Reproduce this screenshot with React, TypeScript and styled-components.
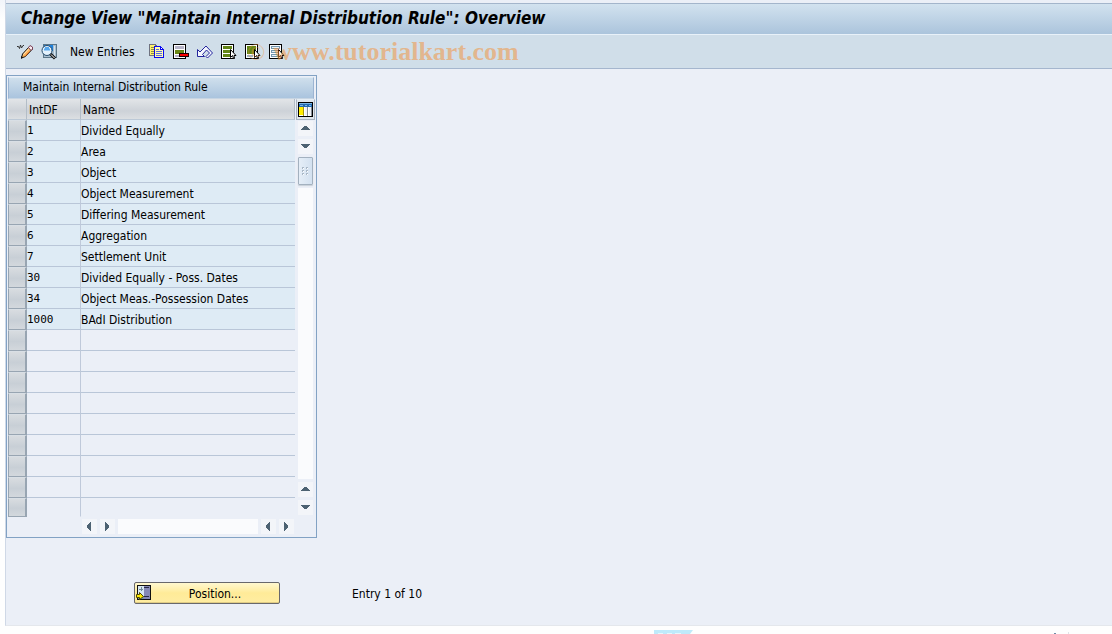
import React from "react";
import styled, { createGlobalStyle } from "styled-components";

const GlobalStyle = createGlobalStyle`
  * { box-sizing: border-box; }
  body {
    margin: 0;
    background: #fefefe;
    color: #000;
    font: 12px/16px "DejaVu Sans Condensed", "DejaVu Sans", sans-serif;
  }
  button { font: inherit; color: inherit; margin: 0; padding: 0; border: 0; background: none; }
  svg { display: block; flex: none; }
`;

const Page = styled.div`
  padding-left: 5px;
  background: linear-gradient(to bottom, #f1f4fa 0, #fefefe 20px);
`;
const Window = styled.main`
  border-left: 1px solid #cfd8e6;
  border-bottom: 1px solid #e4e7ec;
  background: #ebeff7;
  padding: 3px 0 21px;
`;
const TitleBar = styled.header`
  height: 32px;
  display: flex;
  align-items: center;
  padding: 0 15px 2px;
  border-top: 1px solid #a3b5cb;
  border-bottom: 1px solid #e8f1f9;
  background: linear-gradient(#d2e2ef, #abc4dc);
`;
const Title = styled.h1`
  margin: 0;
  font: italic bold 17px/24px "DejaVu Sans Condensed", "DejaVu Sans", sans-serif;
  white-space: nowrap;
`;
const Toolbar = styled.div`
  position: relative;
  display: flex;
  align-items: center;
  gap: 8px;
  height: 34px;
  padding: 0 11px;
  border-bottom: 1px solid #a5b6ce;
  background: #d0dee9;
`;
const ToolButton = styled.button`
  display: flex;
  align-items: center;
  height: 20px;
`;
const TextButton = styled(ToolButton)`
  padding: 0 6px 0 5px;
  white-space: nowrap;
`;
const Watermark = styled.span`
  position: absolute;
  left: 241px;
  top: 2px;
  display: flex;
  align-items: center;
  gap: 8px;
  color: rgba(242, 148, 62, 0.55);
  font: bold 26px/30px "Liberation Serif", serif;
  white-space: nowrap;
  pointer-events: none;
`;
const CopyrightSign = styled.span`
  font-size: 24px;
  font-weight: normal;
  opacity: 0.8;
`;
const Panel = styled.section`
  width: 311px;
  margin-top: 6px;
  padding: 1px;
  border: 1px solid #82a2c4;
`;
const PanelTitle = styled.h2`
  margin: 0 1px 0 0;
  height: 22px;
  padding: 1px 14px;
  border: 1px solid #9cb4d2;
  border-top-color: #dfebf5;
  border-bottom-color: #c7d5e3;
  background: linear-gradient(#cfdfec, #aac4de);
  font-weight: normal;
  font-size: 12px;
  line-height: 17px;
`;
const GridArea = styled.div`
  display: grid;
  grid-template-columns: 288px 19px;
`;
const Table = styled.table`
  width: 287px;
  border-collapse: separate;
  border-spacing: 0;
  table-layout: fixed;
`;
const HeadCell = styled.th<{ $w?: number }>`
  width: ${(p) => (p.$w ? `${p.$w}px` : "auto")};
  height: 21px;
  padding: 2px 2px 0;
  border-right: 1px solid #b3bdc7;
  border-bottom: 1px solid #bcc9d7;
  background: linear-gradient(#e2e5e8, #cdd2d8 60%, #dcdfe2);
  text-align: left;
  font-weight: normal;
`;
const Row = styled.tr<{ $filled: boolean }>`
  height: 21px;
  background: ${(p) => (p.$filled ? "#deebf5" : "#ebeff7")};
  &:last-child { height: 19px; }
  &:last-child td { border-bottom-color: transparent; }
`;
const Cell = styled.td<{ $code?: boolean }>`
  height: inherit;
  padding: 2px 0 0;
  border-bottom: 1px solid #b9c6d8;
  border-right: ${(p) => (p.$code ? "1px solid #bfc9da" : "0")};
  white-space: nowrap;
  ${(p) => p.$code && 'font: 11px/16px "DejaVu Sans Mono", monospace;'}
`;
const SelectorCell = styled.td`
  height: inherit;
  padding: 0;
`;
const Selector = styled.button`
  display: block;
  width: 19px;
  height: 21px;
  border: 1px solid #98a5b2;
  border-top-color: #d9dfe5;
  border-right-width: 2px;
  background: linear-gradient(#d8dce0, #c8cfd6 55%, #d3d8dd);
  tr:last-child & { height: 19px; }
`;
const SideBar = styled.div`
  display: flex;
  flex-direction: column;
  align-items: center;
`;
const ConfigButton = styled.button`
  width: 19px;
  height: 21px;
  padding: 0 1px 1px;
  border: 1px solid #a7b2c0;
  border-top-color: #e5edf4;
  background: #dfe6ed;
`;
const ArrowButton = styled.button`
  display: flex;
  align-items: center;
  justify-content: center;
  flex: none;
  width: 15px;
  height: 15px;
  background: #f3f5f9;
`;
const VerticalScroll = styled.div`
  flex: 1;
  display: flex;
  flex-direction: column;
  gap: 3px;
  padding: 1px 0 2px;
`;
const Track = styled.div`
  flex: 1;
  background: #fafbfd;
`;
const Thumb = styled.div`
  display: flex;
  align-items: center;
  justify-content: center;
  height: 28px;
  border: 1px solid #a3b1bf;
  border-radius: 1px;
  background: linear-gradient(to right, #e5eef7, #d3e1f0);
  box-shadow: 0 1px 1px #c8d0d8;
`;
const HorizontalScroll = styled.div`
  display: flex;
  gap: 3px;
  padding: 2px 2px 2px 74px;
`;
const Footer = styled.div`
  display: flex;
  align-items: center;
  gap: 72px;
  padding: 44px 128px 0;
`;
const PositionButton = styled.button`
  display: flex;
  align-items: center;
  width: 146px;
  height: 22px;
  padding: 0 1px;
  border: 1px solid #68686c;
  border-radius: 2px;
  background: linear-gradient(#fff8d0, #ffeb98 50%, #ffeda2);
  box-shadow: inset 0 -1px #e0cc85;
`;
const ButtonLabel = styled.span`
  flex: 1;
  padding-top: 2px;
  text-align: center;
`;
const EntryCount = styled.span`
  padding-top: 2px;
`;
const Below = styled.div`
  display: flex;
  gap: 361px;
  height: 8px;
  overflow: hidden;
  padding: 4px 0 0 649px;
`;

type IconProps = { children: React.ReactNode };
const Icon = ({ children }: IconProps) => (
  <svg width="16" height="16" viewBox="0 0 16 16" shapeRendering="crispEdges" aria-hidden="true">
    {children}
  </svg>
);

const EditIcon = () => (
  <Icon>
    <g shapeRendering="auto">
      <path d="M0 2.5h1.5l1 2 1-3.5 1 3 1.5-2.5h1" fill="none" stroke="#333" />
      <path d="M4.500 14l1-4 7-7.500 3 2.500-7 7.500z" fill="#ffb65c" stroke="#111" />
      <path d="M6.500 10.500l6-6.500" stroke="#ffe6be" />
      <path d="M11.500 3.500l1.500-2 2.500 1.500v2l-1.500 1.500z" fill="#f8edf2" stroke="#7b4058" />
      <path d="M12.500 7.500l-4.500 5" stroke="#e97725" />
      <path d="M4 15v-3l2 1.500z" fill="#111" />
    </g>
  </Icon>
);
const FindIcon = () => (
  <Icon>
    <path d="M2.5 .5h13v13H2.5z" fill="#a9bfd0" stroke="#5c7688" />
    <path d="M3 1h9v6H3z" fill="#1f82dd" />
    <path d="M13.5 2v10" fill="none" stroke="#d8e4ec" />
    <g shapeRendering="auto">
      <circle cx="6" cy="6.500" r="5" fill="#e3f1fc" stroke="#244a6b" />
      <path d="M3 5.500h6M4 4h4" stroke="#57a8ee" strokeWidth="2" />
      <path d="M9.500 10l4.500 4.500" stroke="#111" strokeWidth="3" />
      <path d="M10 10.500l3.500 3.500" stroke="#fff" />
    </g>
  </Icon>
);
const CopyIcon = () => (
  <Icon>
    <path d="M0 0h6l2 2v10H0z" fill="#6f7280" />
    <path d="M1 1h5v10H1z" fill="#fff36b" />
    <path d="M2 3h3v1H2zM2 5h3v1H2zM2 7h3v1H2zM2 9h3v1H2z" fill="#8d8a4c" />
    <path d="M5 2h7v1h1v1h1v1h1v9H5z" fill="#0a0af0" />
    <path d="M6 3h5v3h3v7H6z" fill="#fffbb0" />
    <path d="M12 4h1v1h-1z" fill="#fff" />
    <path d="M7 5h3v1H7zM7 7h6v1H7zM7 9h6v1H7zM7 11h6v1H7z" fill="#5c6be0" />
  </Icon>
);
const DeleteIcon = () => (
  <Icon>
    <path d="M.5 .5h12v14H.5z" fill="#fff" stroke="#000" />
    <path d="M2 2h9v3H2z" fill="#b7b5c9" />
    <path d="M2 6h9v4H2z" fill="#688615" />
    <path d="M2 11h4v2H2z" fill="#b7b5c9" />
    <path d="M6 9h10v4H6z" fill="#1c0000" />
    <path d="M7 10h8v2H7z" fill="#f90000" />
  </Icon>
);
const UndoIcon = () => (
  <Icon>
    <path d="M.5 5.500v7h7L5.500 10.500l4-4.500 3 3-3.500 3.500 1.500 1.500 5-5-6.500-7L3 8z" fill="#f5f7ff" stroke="#23249c" shapeRendering="auto" />
  </Icon>
);
const Pointer = () => (
  <path d="M9.5 5.500v8l2-2 1 3h1l-.5-3h2z" fill="#fff" stroke="#000" shapeRendering="auto" />
);
const SelectAllIcon = () => (
  <Icon>
    <path d="M.5 .5h12v14H.5z" fill="#fff" stroke="#000" />
    <path d="M2 2h9v3H2zM2 6h9v3H2zM2 10h9v3H2z" fill="#638617" />
    <Pointer />
  </Icon>
);
const SelectBlockIcon = () => (
  <Icon>
    <path d="M.5 .5h12v14H.5z" fill="#fff" stroke="#000" />
    <path d="M2 2h9v8H2z" fill="#638617" />
    <path d="M2 11h6v2H2z" fill="#9db0c4" />
    <Pointer />
  </Icon>
);
const DeselectIcon = () => (
  <Icon>
    <path d="M.5 .5h12v14H.5z" fill="#fff" stroke="#000" />
    <path d="M2 2h9v3H2zM2 6h9v3H2zM2 10h7v3H2z" fill="#7396ae" />
    <path d="M3 3h7v1H3zM3 7h7v1H3zM3 11h5v1H3z" fill="#e9f2f8" />
    <Pointer />
  </Icon>
);
const ColumnsIcon = () => (
  <svg width="15" height="15" viewBox="0 0 15 15" shapeRendering="crispEdges" aria-hidden="true">
    <path d="M.5.5h14v14H.5z" fill="#fff" stroke="#000" />
    <path d="M1 1h13v4H1z" fill="#2269b0" />
    <path d="M1 1h13v1H1zM2 3h3v1H2zM7 3h2v1H7zM11 3h2v1h-2z" fill="#79b5e5" />
    <path d="M1 5h4v8H1z" fill="#ffed00" />
    <path d="M5 5h1v9H5z" fill="#a29312" />
    <path d="M7 5h2v8H7zM11 5h2v8h-2z" fill="#eef1f5" />
    <path d="M9 5h1v9H9zM13 5h1v9h-1z" fill="#858c96" />
  </svg>
);
const PositionIcon = () => (
  <Icon>
    <path d="M1.5.5h13v14h-13z" fill="#d7e7f2" stroke="#111" />
    <path d="M8 1h6v13H8z" fill="#8588b6" />
    <path d="M2 11h6v3H2z" fill="#7890a0" />
    <path d="M3 4h4v1H3zM5 2h1v4H5z" fill="#6f8795" />
    <path d="M8 2h5v1H8zM8 11h5v1H8z" fill="#292b49" />
    <path d="M.5 9.5h3v-2l4 4-4 3v-2h-3z" fill="#ffea00" stroke="#4d4800" shapeRendering="auto" />
  </Icon>
);

const arrows = {
  up: "M0 6h9v-1h-1v-1h-1v-1h-1v-1h-3v1h-1v1h-1v1h-1z",
  down: "M0 2h9v1h-1v1h-1v1h-1v1h-3v-1h-1v-1h-1v-1h-1z",
  left: "M6 0v9h-1v-1h-1v-1h-1v-1h-1v-3h1v-1h1v-1h1v-1z",
  right: "M2 0v9h1v-1h1v-1h1v-1h1v-3h-1v-1h-1v-1h-1v-1z",
};
const Arrow = ({ dir }: { dir: keyof typeof arrows }) => (
  <ArrowButton type="button" aria-label={`Scroll ${dir}`}>
    <svg width="9" height="9" viewBox="0 0 9 9" shapeRendering="crispEdges">
      <path d={arrows[dir]} fill="#4d6272" />
    </svg>
  </ArrowButton>
);

const rules: [string, string][] = [
  ["1", "Divided Equally"],
  ["2", "Area"],
  ["3", "Object"],
  ["4", "Object Measurement"],
  ["5", "Differing Measurement"],
  ["6", "Aggregation"],
  ["7", "Settlement Unit"],
  ["30", "Divided Equally - Poss. Dates"],
  ["34", "Object Meas.-Possession Dates"],
  ["1000", "BAdI Distribution"],
];
const visibleRows = Array.from({ length: 19 }, (_, i) => rules[i] ?? ["", ""]);

const trailingTools = [
  { label: "Copy", Glyph: CopyIcon },
  { label: "Delete", Glyph: DeleteIcon },
  { label: "Undo", Glyph: UndoIcon },
  { label: "Select all", Glyph: SelectAllIcon },
  { label: "Select block", Glyph: SelectBlockIcon },
  { label: "Deselect all", Glyph: DeselectIcon },
];

export default function App() {
  return (
    <>
      <GlobalStyle />
      <Page>
        <Window>
          <TitleBar>
            <Title>Change View "Maintain Internal Distribution Rule": Overview</Title>
          </TitleBar>
          <Toolbar>
            <ToolButton type="button" aria-label="Edit"><EditIcon /></ToolButton>
            <ToolButton type="button" aria-label="Details"><FindIcon /></ToolButton>
            <TextButton type="button">New Entries</TextButton>
            {trailingTools.map(({ label, Glyph }) => (
              <ToolButton key={label} type="button" aria-label={label}><Glyph /></ToolButton>
            ))}
            <Watermark>
              <CopyrightSign>©</CopyrightSign>
              www.tutorialkart.com
            </Watermark>
          </Toolbar>
          <Panel>
            <PanelTitle>Maintain Internal Distribution Rule</PanelTitle>
            <GridArea>
              <Table>
                <thead>
                  <tr>
                    <HeadCell $w={19} />
                    <HeadCell $w={54}>IntDF</HeadCell>
                    <HeadCell>Name</HeadCell>
                  </tr>
                </thead>
                <tbody>
                  {visibleRows.map(([code, name], i) => (
                    <Row key={i} $filled={code !== ""}>
                      <SelectorCell><Selector type="button" aria-label={`Select row ${i + 1}`} /></SelectorCell>
                      <Cell $code>{code}</Cell>
                      <Cell>{name}</Cell>
                    </Row>
                  ))}
                </tbody>
              </Table>
              <SideBar>
                <ConfigButton type="button" aria-label="Configure columns"><ColumnsIcon /></ConfigButton>
                <VerticalScroll>
                  <Arrow dir="up" />
                  <Arrow dir="down" />
                  <Thumb>
                    <svg width="7" height="8" viewBox="0 0 7 8" shapeRendering="crispEdges">
                      <path d="M0 0h2v2H0zM4 0h2v2H4zM0 3h2v2H0zM4 3h2v2H4zM0 6h2v2H0zM4 6h2v2H4z" fill="#a9b8c7" />
                      <path d="M1 1h1v1H1zM5 1h1v1H5zM1 4h1v1H1zM5 4h1v1H5zM1 7h1v1H1zM5 7h1v1H5z" fill="#fff" />
                    </svg>
                  </Thumb>
                  <Track />
                  <Arrow dir="up" />
                  <Arrow dir="down" />
                </VerticalScroll>
              </SideBar>
              <HorizontalScroll>
                <Arrow dir="left" />
                <Arrow dir="right" />
                <Track />
                <Arrow dir="left" />
                <Arrow dir="right" />
              </HorizontalScroll>
            </GridArea>
          </Panel>
          <Footer>
            <PositionButton type="button">
              <PositionIcon />
              <ButtonLabel>Position...</ButtonLabel>
            </PositionButton>
            <EntryCount>Entry 1 of 10</EntryCount>
          </Footer>
        </Window>
        <Below>
          <svg width="39" height="4" viewBox="0 0 39 4" aria-hidden="true">
            <path d="M0 0h39l-3 4H0z" fill="#bfeafa" />
            <path d="M4 3.5h5M13 3.5h5M21 3.5h6" stroke="#e4f7fd" />
          </svg>
          <svg width="16" height="4" viewBox="0 0 16 4" aria-hidden="true">
            <path d="M0 3h2v1H0z" fill="#6f8ca8" />
            <path d="M14 2h1v2h-1z" fill="#dfe3e8" />
          </svg>
        </Below>
      </Page>
    </>
  );
}
